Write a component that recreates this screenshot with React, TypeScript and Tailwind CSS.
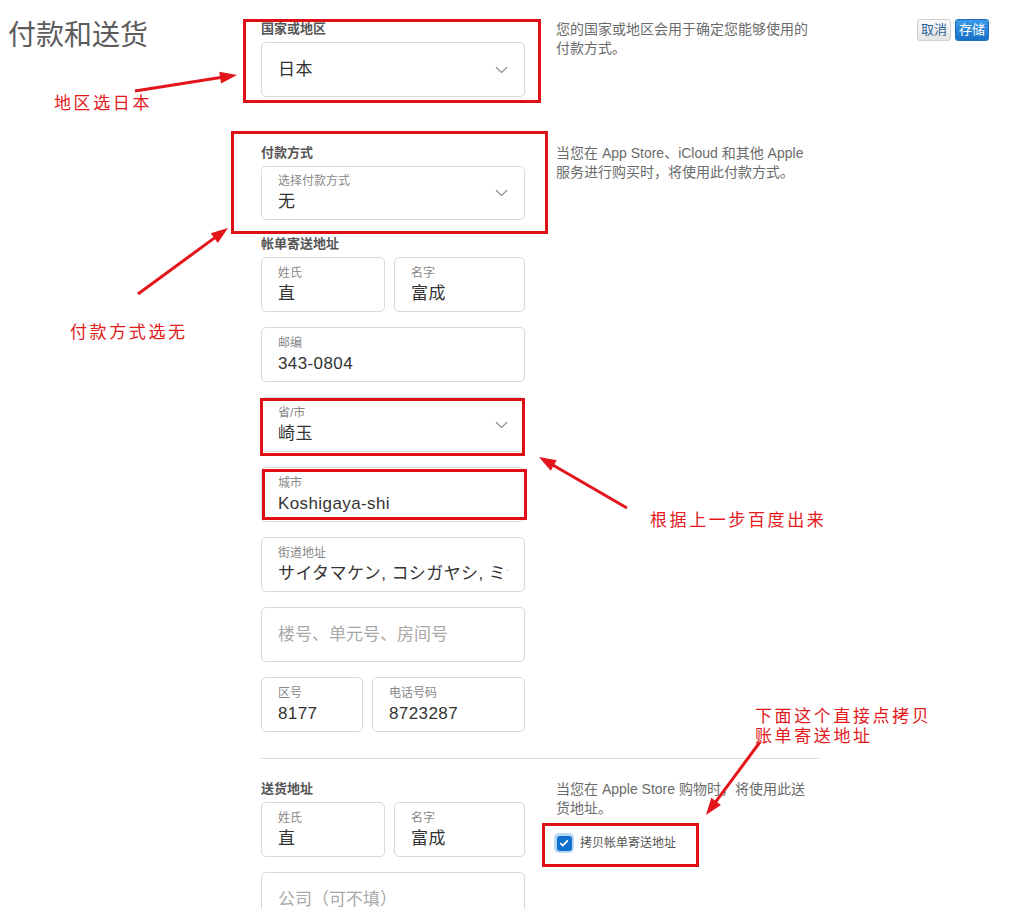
import type { ReactNode } from "react";

const FONT = "font-['Liberation_Sans','Noto_Sans_CJK_SC',sans-serif]";

function Chevron() {
  return (
    <svg width="13" height="8" viewBox="0 0 13 8" className="shrink-0">
      <path d="M1 1.2l5.5 5.3 5.5-5.3" fill="none" stroke="#8c8c8c" strokeWidth="1.2" />
    </svg>
  );
}

function GroupLabel({ children }: { children: ReactNode }) {
  return <div className="text-[13px] font-bold leading-[18px] text-[#555]">{children}</div>;
}

function Field({
  label,
  value,
  placeholder,
  select,
  className = "",
}: {
  label?: string;
  value?: string;
  placeholder?: string;
  select?: boolean;
  className?: string;
}) {
  return (
    <div
      className={`flex h-[55px] items-center rounded-[5px] border border-[#d9d9d9] bg-white pl-[16px] pr-[16px] ${className}`}
    >
      <div className="min-w-0 flex-1 overflow-hidden">
        {label && <div className="text-[12px] leading-[16px] text-[#888]">{label}</div>}
        {value && (
          <div
            className={`whitespace-nowrap text-[17px] leading-[22px] tracking-[0.4px] text-[#333] ${label ? "mt-[2px]" : ""}`}
          >
            {value}
          </div>
        )}
        {placeholder && (
          <div className="whitespace-nowrap text-[17px] leading-[22px] text-[#a8a8a8]">{placeholder}</div>
        )}
      </div>
      {select && <Chevron />}
    </div>
  );
}

function Note({ children }: { children: ReactNode }) {
  return <p className="ml-[31px] w-[280px] text-[14px] leading-[19px] text-[#6b6b6b]">{children}</p>;
}

// annotation layer: red frames, arrows and notes drawn on top of the form
const frames = [
  { left: 243, top: 19, width: 298, height: 84 },
  { left: 231, top: 131, width: 317, height: 103 },
  { left: 260, top: 398, width: 265, height: 58 },
  { left: 262, top: 469, width: 265, height: 51 },
  { left: 542, top: 823, width: 157, height: 44 },
];

const arrows: [number, number, number, number][] = [
  [135, 91, 237, 75],
  [138, 294, 228, 228],
  [627, 508, 539, 457],
  [760, 742, 706, 815],
];

function Arrow({ x1, y1, x2, y2 }: { x1: number; y1: number; x2: number; y2: number }) {
  const dx = x2 - x1;
  const dy = y2 - y1;
  const len = Math.hypot(dx, dy);
  const ux = dx / len;
  const uy = dy / len;
  const head = 17;
  const half = 6;
  const bx = x2 - ux * head;
  const by = y2 - uy * head;
  const pts = `${x2},${y2} ${bx - uy * half},${by + ux * half} ${bx + uy * half},${by - ux * half}`;
  return (
    <g>
      <line x1={x1} y1={y1} x2={bx + ux * 2} y2={by + uy * 2} stroke="#e3151b" strokeWidth="3" />
      <polygon points={pts} fill="#e3151b" />
    </g>
  );
}

const notes = [
  { left: 54, top: 94, text: "地区选日本" },
  { left: 70, top: 323, text: "付款方式选无" },
  { left: 650, top: 511, text: "根据上一步百度出来" },
  { left: 755, top: 707, text: "下面这个直接点拷贝\n账单寄送地址" },
];

export default function App() {
  return (
    <div className={`relative h-[909px] w-[1011px] overflow-hidden bg-white ${FONT}`}>
      <div className="flex">
        <h1 className="w-[261px] shrink-0 pl-[8px] pt-[19px] text-[28px] font-normal leading-[34px] text-[#5c5c5c]">
          付款和送货
        </h1>

        <div className="w-[558px] shrink-0 pt-[20px]">
          {/* country */}
          <div className="flex">
            <div className="w-[264px] shrink-0">
              <GroupLabel>国家或地区</GroupLabel>
              <Field className="mt-[4px]" value="日本" select />
            </div>
            <Note>
              您的国家或地区会用于确定您能够使用的
              <br />
              付款方式。
            </Note>
          </div>

          {/* payment */}
          <div className="mt-[47px] flex">
            <div className="w-[264px] shrink-0">
              <GroupLabel>付款方式</GroupLabel>
              <Field className="mt-[4px] !h-[54px]" label="选择付款方式" value="无" select />
            </div>
            <Note>
              当您在 App Store、iCloud 和其他 Apple
              <br />
              服务进行购买时，将使用此付款方式。
            </Note>
          </div>

          {/* billing address */}
          <div className="mt-[15px] w-[264px]">
            <GroupLabel>帐单寄送地址</GroupLabel>
            <div className="mt-[4px] flex flex-col gap-[15px]">
              <div className="flex gap-[9px]">
                <Field className="w-[124px]" label="姓氏" value="直" />
                <Field className="flex-1" label="名字" value="富成" />
              </div>
              <Field label="邮编" value="343-0804" />
              <Field label="省/市" value="崎玉" select />
              <Field label="城市" value="Koshigaya-shi" />
              <Field label="街道地址" value="サイタマケン, コシガヤシ, ミナミ" />
              <Field placeholder="楼号、单元号、房间号" />
              <div className="flex gap-[9px]">
                <Field className="w-[102px]" label="区号" value="8177" />
                <Field className="flex-1" label="电话号码" value="8723287" />
              </div>
            </div>
          </div>

          <div className="mt-[26px] h-px bg-[#dcdcdc]" />

          {/* shipping address */}
          <div className="mt-[21px] flex">
            <div className="w-[264px] shrink-0">
              <GroupLabel>送货地址</GroupLabel>
              <div className="mt-[4px] flex flex-col gap-[15px]">
                <div className="flex gap-[9px]">
                  <Field className="w-[124px]" label="姓氏" value="直" />
                  <Field className="flex-1" label="名字" value="富成" />
                </div>
                <Field placeholder="公司（可不填）" />
              </div>
            </div>
            <div>
              <Note>
                当您在 Apple Store 购物时，将使用此送
                <br />
                货地址。
              </Note>
              <label className="ml-[29px] mt-[15px] flex items-center gap-[6px]">
                <span className="flex h-[20px] w-[20px] items-center justify-center rounded-[5px] bg-[#b9d8f7]">
                  <span className="flex h-[15px] w-[15px] items-center justify-center rounded-[3px] bg-[#0f6fcf]">
                    <svg width="10" height="8" viewBox="0 0 10 8">
                      <path d="M1.2 4.2l2.6 2.4L8.8 1.4" fill="none" stroke="#fff" strokeWidth="1.8" />
                    </svg>
                  </span>
                </span>
                <span className="text-[12px] leading-[18px] text-[#555]">拷贝帐单寄送地址</span>
              </label>
            </div>
          </div>
        </div>

        <div className="ml-auto mr-[22px] mt-[19px] flex items-start gap-[4px]">
          <button className="h-[22px] rounded-[3px] border border-[#cfcfcf] bg-gradient-to-b from-[#fbfbfb] to-[#e4e4e4] px-[3px] text-[13px] leading-[20px] text-[#2b6597]">
            取消
          </button>
          <button className="h-[22px] rounded-[3px] border border-[#1b6fbf] bg-gradient-to-b from-[#3c9ae8] to-[#1670c6] px-[3px] text-[13px] leading-[20px] text-white">
            存储
          </button>
        </div>
      </div>

      {frames.map((f, i) => (
        <div
          key={i}
          className="pointer-events-none absolute border-[3px] border-[#dd1016]"
          style={{ left: f.left, top: f.top, width: f.width, height: f.height }}
        />
      ))}

      <svg className="pointer-events-none absolute inset-0" width="1011" height="909">
        {arrows.map(([x1, y1, x2, y2], i) => (
          <Arrow key={i} x1={x1} y1={y1} x2={x2} y2={y2} />
        ))}
      </svg>

      {notes.map((n, i) => (
        <div
          key={i}
          className="pointer-events-none absolute whitespace-pre text-[17px] leading-[20px] tracking-[2.6px] text-[#e3191c]"
          style={{ left: n.left, top: n.top }}
        >
          {n.text}
        </div>
      ))}
    </div>
  );
}
